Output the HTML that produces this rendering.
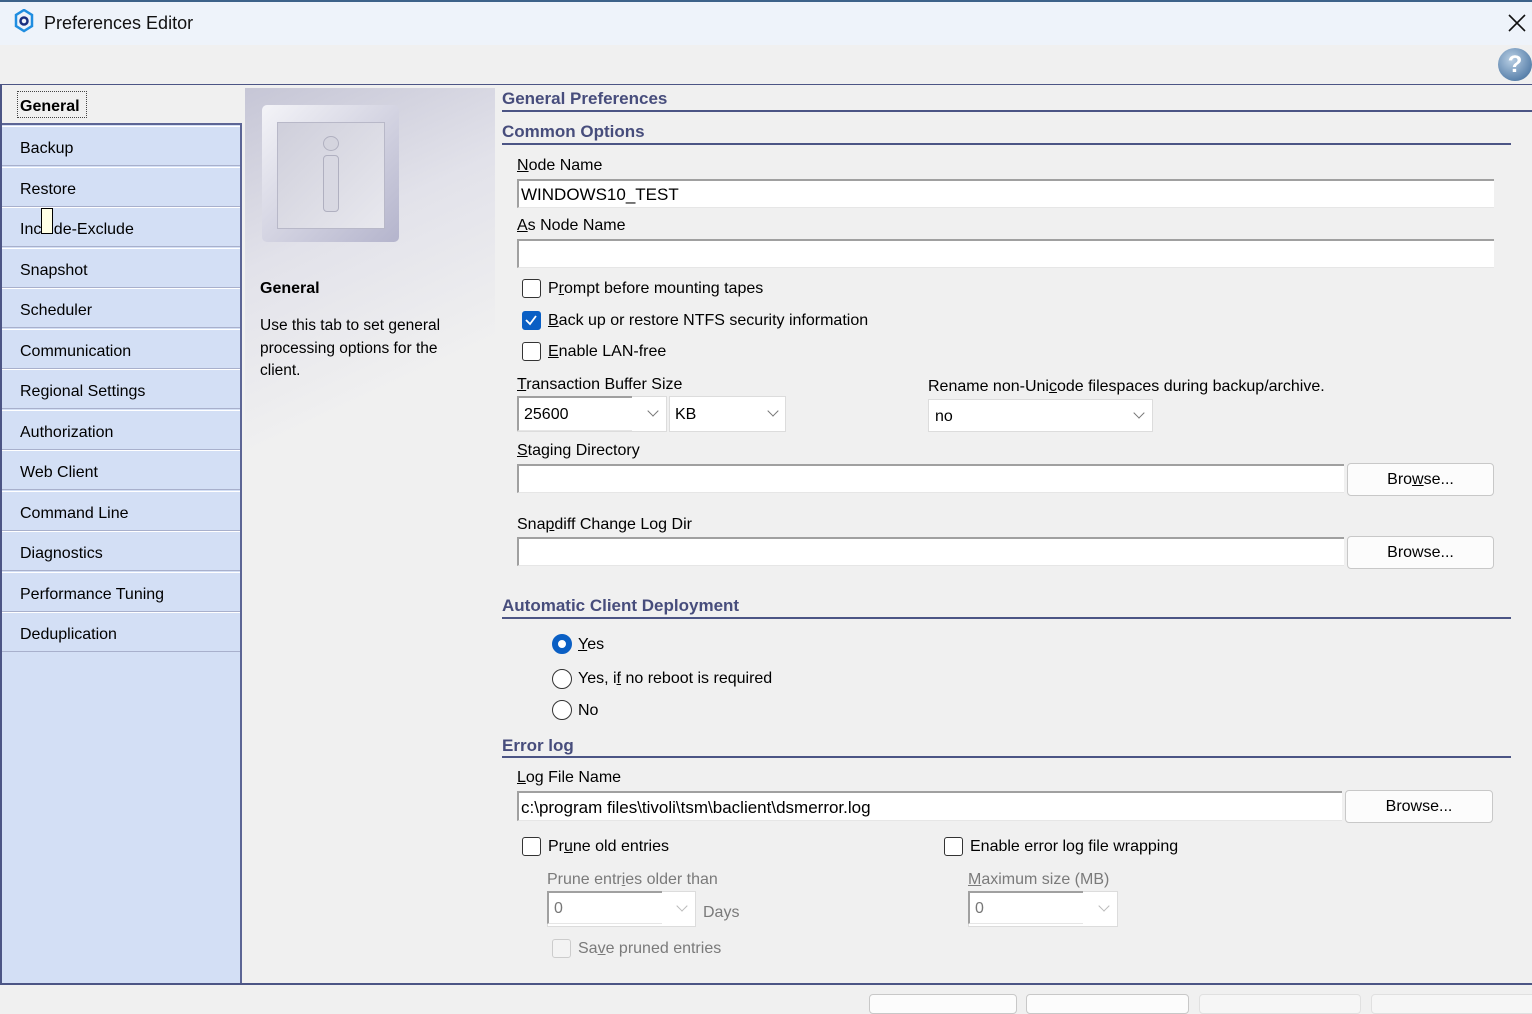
<!DOCTYPE html>
<html><head><meta charset="utf-8"><style>
*{box-sizing:border-box;margin:0;padding:0}
body{width:1532px;height:1003px;position:relative;overflow:hidden;background:#f0f0f0;font-family:"Liberation Sans",sans-serif;font-size:16px;color:#000}
.a{position:absolute;white-space:nowrap;line-height:22px}
.tb{left:0;top:0;width:1532px;height:45px;background:#eef3fa;border-top:2px solid #3d6289}
.tab{position:absolute;left:2px;width:238px;height:40px;background:#d3dff5;border-bottom:1px solid #a8b0cc;border-top:1px solid #fff;padding:12px 0 0 18px;font-size:16px;line-height:19px}
.h{font-weight:bold;color:#474d7c;font-size:17px}
.line{position:absolute;height:2px;background:#4c5585}
.inp{position:absolute;background:#fff;border-top:2px solid #a0a0a0;border-left:2px solid #a0a0a0;border-bottom:1px solid #e6e6e6}
.cb{position:absolute;width:19px;height:19px;border:1.5px solid #333;border-radius:3px;background:#fff}
.rb{position:absolute;width:20px;height:20px;border:1.5px solid #333;border-radius:50%;background:#fff}
.btn{position:absolute;background:#fcfcfc;border:1px solid #c8c8c8;border-radius:4px;text-align:center;padding-top:7px}
.combo{position:absolute;background:#fff;border:1px solid #dcdcdc}
.arr{position:absolute;width:8px;height:8px;border-right:1.2px solid #777;border-bottom:1.2px solid #777;transform:rotate(45deg)}
u{text-decoration:underline}
.g{color:#7a7a7a}
</style></head><body>
<div class="a tb"></div>
<svg class="a" style="left:14px;top:9px" width="20" height="24" viewBox="0 0 20 24"><path d="M10 1 L18 6 L18 17 L10 22 L2 17 L2 6 Z" fill="none" stroke="#1f8de0" stroke-width="2.5"/><circle cx="10" cy="12" r="3.5" fill="none" stroke="#1a2f80" stroke-width="2.5"/></svg>
<div class="a" style="left:44px;top:12px;font-size:18px;color:#111">Preferences Editor</div>
<svg class="a" style="left:1508px;top:14px" width="18" height="18"><path d="M1 1L17 17M17 1L1 17" stroke="#111" stroke-width="1.6"/></svg>
<div class="a" style="left:1498px;top:48px;width:34px;height:33px;border-radius:50%;background:radial-gradient(circle at 40% 35%,#b9cfe4,#5d84ad 70%,#3f6287);text-align:center;color:#fff;font-weight:bold;font-size:24px;line-height:33px">?</div>
<div class="line" style="left:0;top:84px;width:1532px;height:1px"></div>
<div class="a" style="left:0;top:84px;width:2px;height:900px;background:#4c5585"></div>
<!-- left tabs -->
<div class="a" style="left:2px;top:85px;width:240px;height:899px;background:#d3dff5;border-right:2px solid #5c6595"></div>
<div class="a" style="left:2px;top:85px;width:240px;height:40px;background:#f0f0f0;border-bottom:2px solid #5c6595"></div>
<div class="a" style="left:17px;top:91px;width:70px;padding:5px 0 0 2px;border:1px dotted #444;font-weight:bold;font-size:16px;height:27px;line-height:20px">General</div>
<div class="tab" style="top:126px">Backup</div>
<div class="tab" style="top:167px">Restore</div>
<div class="tab" style="top:207px">Include-Exclude</div>
<div class="a" style="left:41px;top:208px;width:12px;height:26px;background:#ffffe6;border:1px solid #000"></div>
<div class="tab" style="top:248px">Snapshot</div>
<div class="tab" style="top:288px">Scheduler</div>
<div class="tab" style="top:329px">Communication</div>
<div class="tab" style="top:369px">Regional Settings</div>
<div class="tab" style="top:410px">Authorization</div>
<div class="tab" style="top:450px">Web Client</div>
<div class="tab" style="top:491px">Command Line</div>
<div class="tab" style="top:531px">Diagnostics</div>
<div class="tab" style="top:572px">Performance Tuning</div>
<div class="tab" style="top:612px">Deduplication</div>
<!-- info panel -->
<div class="a" style="left:245px;top:88px;width:250px;height:500px;background:linear-gradient(155deg,#c6c6d6 0%,#e2e2ea 30%,#f0f0f0 60%)"></div>
<div class="a" style="left:262px;top:105px;width:137px;height:137px;border-radius:5px;background:linear-gradient(135deg,#f4f4f8,#b4b4cc);"></div>
<div class="a" style="left:277px;top:122px;width:108px;height:107px;background:linear-gradient(135deg,#cfcfdb,#e8e8ee);border:1px solid #b8b8c8"></div>
<div class="a" style="left:323px;top:136px;width:16px;height:15px;border-radius:50%;background:#d4d4de;border:1px solid #b0b0c0"></div>
<div class="a" style="left:323px;top:155px;width:16px;height:57px;border-radius:4px;background:#d8d8e2;border:1px solid #b0b0c0"></div>
<div class="a" style="left:260px;top:278px;font-weight:bold">General</div>
<div class="a" style="left:260px;top:315px;line-height:22.5px;font-size:15.5px;white-space:normal;width:210px">Use this tab to set general processing options for the client.</div>
<!-- headings -->
<div class="a h" style="left:502px;top:88px">General Preferences</div>
<div class="line" style="left:502px;top:110px;width:1030px"></div>
<div class="a h" style="left:502px;top:121px">Common Options</div>
<div class="line" style="left:502px;top:143px;width:1009px"></div>
<div class="a" style="left:517px;top:155px"><u>N</u>ode Name</div>
<div class="inp" style="left:517px;top:179px;width:977px;height:29px;padding:4px 2px;font-size:17px">WINDOWS10_TEST</div>
<div class="a" style="left:517px;top:215px"><u>A</u>s Node Name</div>
<div class="inp" style="left:517px;top:239px;width:977px;height:29px"></div>
<div class="cb" style="left:522px;top:279px"></div><div class="a" style="left:548px;top:278px">P<u>r</u>ompt before mounting tapes</div>
<div class="cb" style="left:522px;top:311px;background:#0a5fc4;border-color:#0a5fc4"><svg width="16" height="16" style="position:absolute;left:0;top:0"><path d="M3 8L7 12L13 4" stroke="#fff" stroke-width="1.8" fill="none"/></svg></div><div class="a" style="left:548px;top:310px"><u>B</u>ack up or restore NTFS security information</div>
<div class="cb" style="left:522px;top:342px"></div><div class="a" style="left:548px;top:341px"><u>E</u>nable LAN-free</div>
<div class="a" style="left:517px;top:374px"><u>T</u>ransaction Buffer Size</div>
<div class="combo" style="left:517px;top:396px;width:150px;height:36px"></div>
<div class="inp" style="left:517px;top:396px;width:115px;height:35px;padding:8px 5px">25600</div>
<div class="arr" style="left:649px;top:407px"></div>
<div class="combo" style="left:669px;top:396px;width:117px;height:36px;padding:9px 5px">KB</div>
<div class="arr" style="left:769px;top:407px"></div>
<div class="a" style="left:928px;top:376px">Rename non-Uni<u>c</u>ode filespaces during backup/archive.</div>
<div class="combo" style="left:928px;top:399px;width:225px;height:33px;padding:8px 6px">no</div>
<div class="arr" style="left:1135px;top:409px"></div>
<div class="a" style="left:517px;top:440px"><u>S</u>taging Directory</div>
<div class="inp" style="left:517px;top:464px;width:827px;height:29px"></div>
<div class="btn" style="left:1347px;top:463px;width:147px;height:33px">Bro<u>w</u>se...</div>
<div class="a" style="left:517px;top:514px">Sna<u>p</u>diff Change Log Dir</div>
<div class="inp" style="left:517px;top:537px;width:827px;height:29px"></div>
<div class="btn" style="left:1347px;top:536px;width:147px;height:33px">Browse...</div>
<div class="a h" style="left:502px;top:595px">Automatic Client Deployment</div>
<div class="line" style="left:502px;top:617px;width:1009px"></div>
<div class="rb" style="left:552px;top:634px;border:6px solid #0a5fc4"></div><div class="a" style="left:578px;top:634px"><u>Y</u>es</div>
<div class="rb" style="left:552px;top:669px"></div><div class="a" style="left:578px;top:668px">Yes, i<u>f</u> no reboot is required</div>
<div class="rb" style="left:552px;top:700px"></div><div class="a" style="left:578px;top:700px">No</div>
<div class="a h" style="left:502px;top:735px">Error log</div>
<div class="line" style="left:502px;top:756px;width:1009px"></div>
<div class="a" style="left:517px;top:767px"><u>L</u>og File Name</div>
<div class="inp" style="left:517px;top:791px;width:825px;height:30px;padding:5px 2px;font-size:17px">c:\program files\tivoli\tsm\baclient\dsmerror.log</div>
<div class="btn" style="left:1345px;top:790px;width:148px;height:33px">Browse...</div>
<div class="cb" style="left:522px;top:837px"></div><div class="a" style="left:548px;top:836px">Pr<u>u</u>ne old entries</div>
<div class="cb" style="left:944px;top:837px"></div><div class="a" style="left:970px;top:836px">Enable error lo<u>g</u> file wrapping</div>
<div class="a g" style="left:547px;top:869px">Prune entr<u>i</u>es older than</div>
<div class="combo" style="left:547px;top:891px;width:149px;height:36px"></div>
<div class="inp" style="left:547px;top:891px;width:115px;height:33px;padding:7px 5px;color:#777">0</div>
<div class="arr" style="left:678px;top:902px;border-color:#bbb"></div>
<div class="a g" style="left:703px;top:902px">Days</div>
<div class="a g" style="left:968px;top:869px"><u>M</u>aximum size (MB)</div>
<div class="combo" style="left:968px;top:891px;width:150px;height:36px"></div>
<div class="inp" style="left:968px;top:891px;width:115px;height:33px;padding:7px 5px;color:#777">0</div>
<div class="arr" style="left:1100px;top:902px;border-color:#bbb"></div>
<div class="cb" style="left:552px;top:939px;border-color:#ccc;background:#f3f3f3"></div><div class="a g" style="left:578px;top:938px">Sa<u>v</u>e pruned entries</div>
<!-- bottom -->
<div class="line" style="left:0;top:983px;width:1532px;height:1.5px"></div>
<div class="btn" style="left:869px;top:994px;width:148px;height:20px"></div>
<div class="btn" style="left:1026px;top:994px;width:163px;height:20px"></div>
<div class="btn" style="left:1199px;top:994px;width:162px;height:20px;background:#f6f6f6;border-color:#e0e0e0"></div>
<div class="btn" style="left:1371px;top:994px;width:170px;height:20px;background:#f6f6f6;border-color:#e0e0e0"></div>
</body></html>
